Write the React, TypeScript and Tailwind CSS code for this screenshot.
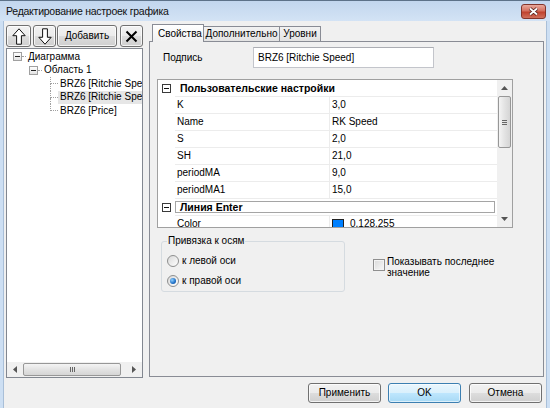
import React from "react";

const font = "font-['Liberation_Sans',Arial,sans-serif]";
const greyBtn =
  "border border-[#707070] rounded-[3px] bg-[linear-gradient(180deg,#f2f2f2_0%,#ebebeb_50%,#dddddd_51%,#cfcfcf_100%)] shadow-[inset_0_0_0_1px_rgba(255,255,255,0.75)] flex items-center justify-center";

function ArrowIcon({ down }: { down?: boolean }) {
  return (
    <svg width="14" height="17" viewBox="0 0 14 17" className={down ? "rotate-180" : ""}>
      <path d="M7 0.8 L13.2 7.7 H9.4 V16.2 H4.6 V7.7 H0.8 Z" fill="#fff" stroke="#111" strokeWidth="1" />
    </svg>
  );
}

function XIcon() {
  return (
    <svg width="13" height="13" viewBox="0 0 13 13">
      <path d="M1.5 1.5 L11.5 11.5 M11.5 1.5 L1.5 11.5" stroke="#000" strokeWidth="2" />
    </svg>
  );
}

function TriUp({ down }: { down?: boolean }) {
  return (
    <svg width="7" height="4" viewBox="0 0 7 4" className={down ? "rotate-180" : ""}>
      <path d="M3.5 0 L7 4 H0 Z" fill="#555" />
    </svg>
  );
}

function TriLeft({ right }: { right?: boolean }) {
  return (
    <svg width="4" height="7" viewBox="0 0 4 7" className={right ? "rotate-180" : ""}>
      <path d="M0 3.5 L4 0 V7 Z" fill="#555" />
    </svg>
  );
}

function Expander() {
  return (
    <span className="w-[9px] h-[9px] shrink-0 border border-[#a0a0a0] bg-[linear-gradient(180deg,#ffffff,#e2e2e2)] flex items-center justify-center">
      <span className="w-[5px] h-px bg-[#222]" />
    </span>
  );
}

function GridMinus() {
  return (
    <span className="w-[9px] h-[9px] border border-[#3a3a3a] bg-white flex items-center justify-center">
      <span className="w-[5px] h-px bg-[#111]" />
    </span>
  );
}

function ChildNode({ label, last, selected }: { label: string; last?: boolean; selected?: boolean }) {
  return (
    <div className="flex h-[13.5px] pl-[43px]">
      <div className="w-[8px] shrink-0 flex flex-col">
        <div className="flex-1 border-l border-b border-dotted border-[#a0a0a0]" />
        <div className={`flex-1 ${last ? "" : "border-l border-dotted border-[#a0a0a0]"}`} />
      </div>
      <span className={`pl-[2px] flex-1 whitespace-nowrap flex items-center ${selected ? "bg-[#e6e6e6]" : ""}`}>{label}</span>
    </div>
  );
}

function PropRow({ name, value }: { name: string; value: React.ReactNode }) {
  return (
    <div className="flex h-[17px] shrink-0">
      <div className="w-[17px] shrink-0" />
      <div className="flex flex-1 border-b border-[#ececec]">
        <div className="w-[155px] border-r border-[#ececec] pl-[2px] flex items-center">{name}</div>
        <div className="flex-1 pl-[2px] flex items-center">{value}</div>
      </div>
    </div>
  );
}

function Radio({ checked }: { checked?: boolean }) {
  return (
    <span className="w-[12px] h-[12px] rounded-full border border-[#8e8f8f] bg-[linear-gradient(135deg,#d8d8d8,#ffffff)] flex items-center justify-center shrink-0">
      {checked && <span className="w-[6px] h-[6px] rounded-full bg-[radial-gradient(circle_at_35%_35%,#8fd0ff,#1f6fc5_60%,#0d4a96)]" />}
    </span>
  );
}

export default function App() {
  return (
    <div className={`${font} w-[550px] h-[408px] overflow-hidden flex flex-col bg-[#cddff3] border-t border-[#5d7289] text-[10px] leading-none text-black`}>
      <div className="h-[20px] shrink-0 flex items-center pl-[6px] pr-[4px] bg-[linear-gradient(180deg,#c2d6ee,#d3e3f5)]">
        <span className="text-[10.5px] tracking-[-0.25px] text-[#101010]">Редактирование настроек графика</span>
        <div className="ml-auto w-[25px] h-[15px] rounded-[3px] border border-[#83352b] bg-[linear-gradient(180deg,#e9a99c_0%,#d4705f_45%,#c0432f_55%,#d0705c_100%)] flex items-center justify-center">
          <svg width="11" height="9" viewBox="0 0 11 9">
            <path d="M2 1.5 L9 7.5 M9 1.5 L2 7.5" stroke="#4a1d18" strokeWidth="3.4" />
            <path d="M2 1.5 L9 7.5 M9 1.5 L2 7.5" stroke="#fff" strokeWidth="1.8" />
          </svg>
        </div>
      </div>

      <div className="flex-1 mx-[3px] border-x border-[#a9bfd8] bg-[#f0f0f0] flex flex-col">
        <div className="flex gap-[6px] px-[2px] pt-[3px]">
          {/* left column */}
          <div className="w-[137px] flex flex-col">
            <div className="mt-[1px] h-[22px] flex">
              <button className={`${greyBtn} w-[25px]`}><ArrowIcon /></button>
              <button className={`${greyBtn} w-[23px] ml-[2px]`}><ArrowIcon down /></button>
              <button className={`${greyBtn} w-[60px] ml-[1px]`}>Добавить</button>
              <button className={`${greyBtn} w-[23px] ml-[3px]`}><XIcon /></button>
            </div>
            <div className="mt-[1px] h-[330px] border border-[#828790] bg-white flex flex-col">
              <div className="flex-1 pt-[1px] overflow-hidden">
                <div className="flex items-center h-[13.5px] pl-[6px]">
                  <Expander />
                  <span className="w-[4px] border-t border-dotted border-[#a0a0a0]" />
                  <span className="ml-[2px]">Диаграмма</span>
                </div>
                <div className="flex items-center h-[13.5px] pl-[22px]">
                  <Expander />
                  <span className="w-[4px] border-t border-dotted border-[#a0a0a0]" />
                  <span className="ml-[2px]">Область 1</span>
                </div>
                <ChildNode label="BRZ6 [Ritchie Speed]" />
                <ChildNode label="BRZ6 [Ritchie Speed]" selected />
                <ChildNode label="BRZ6 [Price]" last />
              </div>
              <div className="h-[15px] flex items-stretch bg-[#f0f0f0]">
                <div className="w-[16px] flex items-center justify-center"><TriLeft /></div>
                <div className="w-[98px] my-px rounded-[2px] border border-[#979797] bg-[linear-gradient(180deg,#f4f4f4,#e3e3e3_50%,#d5d5d5)] flex items-center justify-center gap-[1px]">
                  <span className="w-px h-[5px] bg-[#666]" />
                  <span className="w-px h-[5px] bg-[#666]" />
                  <span className="w-px h-[5px] bg-[#666]" />
                </div>
                <div className="flex-1" />
                <div className="w-[16px] flex items-center justify-center"><TriLeft right /></div>
              </div>
            </div>
          </div>

          {/* right column */}
          <div className="w-[395px] flex flex-col">
            <div className="h-[17px] flex items-end pl-[3px] relative z-10">
              <div className="w-[52px] h-[18px] -mb-px border border-b-0 border-[#898c95] bg-[linear-gradient(180deg,#ffffff,#f0f0f0)] flex items-center pl-[5px]">Свойства</div>
              <div className="w-[77px] h-[15px] -ml-px border border-b-0 border-[#898c95] bg-[linear-gradient(180deg,#f2f2f2,#e3e3e3)] flex items-center justify-center">Дополнительно</div>
              <div className="w-[42px] h-[15px] -ml-px border border-b-0 border-[#898c95] bg-[linear-gradient(180deg,#f2f2f2,#e3e3e3)] flex items-center justify-center">Уровни</div>
            </div>
            <div className="h-[336px] border border-[#898c95] bg-[#f0f0f0] flex flex-col">
              <div className="mt-[5px] h-[21px] flex items-center">
                <span className="w-[103px] pl-[13px]">Подпись</span>
                <div className="w-[181px] h-[21px] border border-[#c3c5cb] border-t-[#abadb3] bg-white flex items-center pl-[4px]">BRZ6 [Ritchie Speed]</div>
              </div>

              <div className="mt-[11px] ml-[7px] w-[356px] h-[149px] border border-[#a0a0a0] bg-white flex overflow-hidden">
                <div className="flex-1 flex flex-col">
                  <div className="flex h-[17px] shrink-0">
                    <div className="w-[17px] shrink-0 flex items-center justify-center"><GridMinus /></div>
                    <div className="flex-1 border-b border-[#ececec] pl-[5px] flex items-center font-bold text-[10.5px]">Пользовательские настройки</div>
                  </div>
                  <PropRow name="K" value="3,0" />
                  <PropRow name="Name" value="RK Speed" />
                  <PropRow name="S" value="2,0" />
                  <PropRow name="SH" value="21,0" />
                  <PropRow name="periodMA" value="9,0" />
                  <PropRow name="periodMA1" value="15,0" />
                  <div className="flex h-[17px] shrink-0">
                    <div className="w-[17px] shrink-0 flex items-center justify-center"><GridMinus /></div>
                    <div className="flex-1 py-[2px] pr-[2px] border-b border-[#ececec]">
                      <div className="h-full border border-[#a5a5a5] pl-[4px] flex items-center font-bold text-[10.5px]">Линия Enter</div>
                    </div>
                  </div>
                  <PropRow
                    name="Color"
                    value={
                      <span className="flex items-center">
                        <span className="w-[12px] h-[11px] border border-[#222] bg-[#0080ff]" />
                        <span className="ml-[6px]">0,128,255</span>
                      </span>
                    }
                  />
                </div>
                <div className="w-[15px] bg-[#f0f0f0] flex flex-col">
                  <div className="h-[16px] flex items-center justify-center"><TriUp /></div>
                  <div className="h-[52px] mx-px rounded-[2px] border border-[#979797] bg-[linear-gradient(90deg,#f4f4f4,#e3e3e3_50%,#d5d5d5)] flex flex-col items-center justify-center gap-[1px]">
                    <span className="w-[5px] h-px bg-[#666]" />
                    <span className="w-[5px] h-px bg-[#666]" />
                    <span className="w-[5px] h-px bg-[#666]" />
                  </div>
                  <div className="flex-1" />
                  <div className="h-[16px] flex items-center justify-center"><TriUp down /></div>
                </div>
              </div>

              <div className="mt-[7px] flex items-start">
                <fieldset className="ml-[11px] w-[184px] border border-[#d5dbe0] rounded-[3px] pb-[3px] pl-[5px]">
                  <legend className="px-[1px] leading-[12px]">Привязка к осям</legend>
                  <div className="pt-[7px] flex flex-col gap-[6px]">
                    <label className="h-[14px] flex items-center gap-[3px]"><Radio />к левой оси</label>
                    <label className="h-[14px] flex items-center gap-[3px]"><Radio checked />к правой оси</label>
                  </div>
                </fieldset>
                <div className="ml-[28px] mt-[21px] flex items-start gap-[2px]">
                  <span className="mt-[3px] w-[12px] h-[12px] border border-[#8f8f8f] bg-[linear-gradient(135deg,#d9d9d9,#f9f9f9)] shadow-[inset_0_0_0_1px_#f4f4f4]" />
                  <span className="leading-[11px]">Показывать последнее<br />значение</span>
                </div>
              </div>
            </div>
          </div>
        </div>

        <div className="mt-[5px] flex justify-end pr-[4px]">
          <button className={`${greyBtn} w-[73px] h-[20px]`}>Применить</button>
          <button className="ml-[7px] w-[73px] h-[20px] rounded-[3px] border border-[#3c7fb1] bg-[linear-gradient(180deg,#eaf6fd_0%,#d9f0fc_50%,#bee6fd_51%,#a7d9f5_100%)] shadow-[inset_0_0_0_1px_rgba(255,255,255,0.6)] flex items-center justify-center">OK</button>
          <button className={`${greyBtn} ml-[8px] w-[73px] h-[20px]`}>Отмена</button>
        </div>
      </div>
    </div>
  );
}
